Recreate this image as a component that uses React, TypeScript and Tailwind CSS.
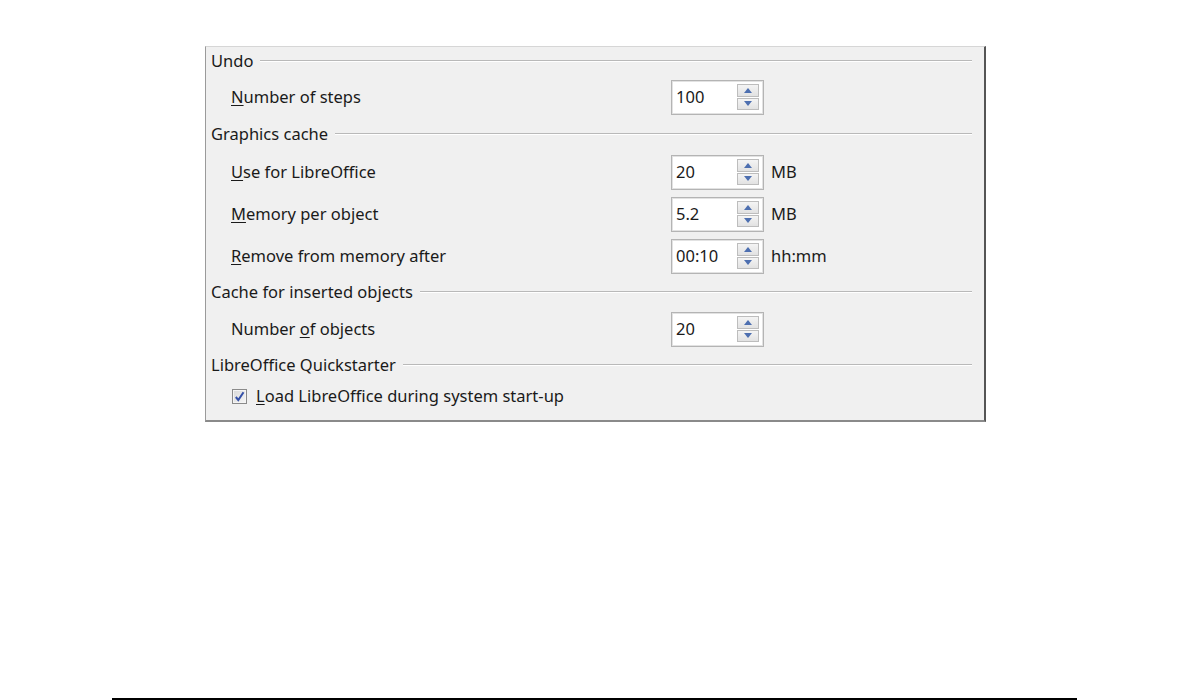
import React from "react";

const font = { fontFamily: '"Noto Sans", "Open Sans", sans-serif' };

function Header({ title }: { title: string }) {
  return (
    <div className="flex h-[28px] items-center pl-[5px] pr-[12px]">
      <span className="whitespace-nowrap text-[16.5px] text-[#1a1a1a]">{title}</span>
      <div className="ml-[7px] flex-1 border-t border-b border-t-[#b9b9b9] border-b-white" />
    </div>
  );
}

function Spin({ value }: { value: string }) {
  return (
    <div className="flex h-[35px] w-[93px] items-center border border-[#b4b4b4] bg-white pl-[4px] pr-[4px] shadow-[inset_0_0_0_1px_#e2e2e2]">
      <span className="flex-1 text-[16.5px] text-[#1a1a1a]">{value}</span>
      <div className="flex h-[26px] w-[22px] flex-col gap-[1px]">
        {[0, 1].map((i) => (
          <div
            key={i}
            className="flex flex-1 items-center justify-center border border-[#bdbdbd] bg-gradient-to-b from-[#f4f4f4] to-[#e2e2e2]"
          >
            <svg width="8" height="5" viewBox="0 0 8 5">
              {i === 0 ? (
                <path d="M0 5 L4 0 L8 5 Z" fill="#4d6fb0" />
              ) : (
                <path d="M0 0 L4 5 L8 0 Z" fill="#4d6fb0" />
              )}
            </svg>
          </div>
        ))}
      </div>
    </div>
  );
}

function Row({
  label,
  value,
  unit,
}: {
  label: [string, string, string];
  value: string;
  unit?: string;
}) {
  return (
    <div className="flex h-[42px] items-center">
      <div className="w-[465px] pl-[25px] text-[16.5px] text-[#1a1a1a]">
        {label[0]}
        <span className="underline underline-offset-2">{label[1]}</span>
        {label[2]}
      </div>
      <Spin value={value} />
      {unit && <span className="ml-[7px] text-[16.5px] text-[#1a1a1a]">{unit}</span>}
    </div>
  );
}

export default function App() {
  return (
    <div className="flex h-[700px] w-[1190px] flex-col bg-white" style={font}>
      <div className="ml-[205px] mt-[46px] flex h-[376px] w-[781px] flex-col border-t border-l border-r-2 border-b-2 border-t-[#d6d6d6] border-l-[#9a9a9a] border-r-[#555555] border-b-[#8a8a8a] bg-[#f0f0f0]">
        <Header title="Undo" />
        <div className="mb-[2px] mt-[1px]">
          <Row label={["", "N", "umber of steps"]} value="100" />
        </div>
        <Header title="Graphics cache" />
        <div className="mt-[3px]">
          <Row label={["", "U", "se for LibreOffice"]} value="20" unit="MB" />
          <Row label={["", "M", "emory per object"]} value="5.2" unit="MB" />
          <Row label={["", "R", "emove from memory after"]} value="00:10" unit="hh:mm" />
        </div>
        <div className="mt-[1px]">
          <Header title="Cache for inserted objects" />
        </div>
        <div className="mt-[2px]">
          <Row label={["Number ", "o", "f objects"]} value="20" />
        </div>
        <div className="mt-[1px]">
          <Header title="LibreOffice Quickstarter" />
        </div>
        <div className="flex h-[34px] items-center pl-[26px]">
          <div className="flex h-[15px] w-[15px] items-center justify-center border border-[#8a8a8a] bg-gradient-to-br from-[#d8d8d8] to-[#f6f6f6] shadow-[inset_0_0_0_1px_#f4f4f4]">
            <svg width="11" height="11" viewBox="0 0 11 11">
              <path d="M1.8 6 L4.3 9 L9.5 1.3" stroke="#3450a8" strokeWidth="2" fill="none" />
            </svg>
          </div>
          <span className="ml-[9px] text-[16.5px] text-[#1a1a1a]">
            <span className="underline underline-offset-2">L</span>oad LibreOffice during system start-up
          </span>
        </div>
      </div>
      <div className="mt-auto ml-[112px] h-[2px] w-[965px] bg-black" />
    </div>
  );
}
